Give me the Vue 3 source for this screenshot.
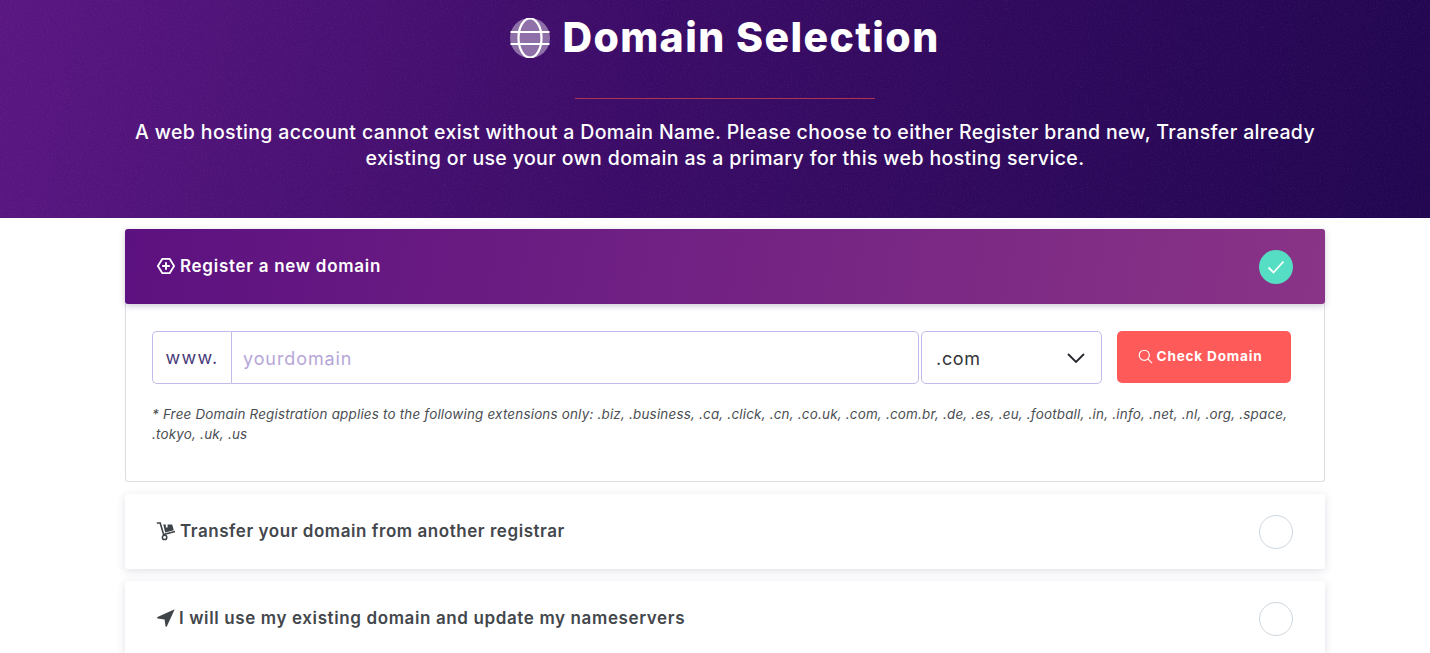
<script setup>
const tlds = '* Free Domain Registration applies to the following extensions only: .biz, .business, .ca, .click, .cn, .co.uk, .com, .com.br, .de, .es, .eu, .football, .in, .info, .net, .nl, .org, .space, .tokyo, .uk, .us'
</script>

<template>
  <div class="viewport">
    <div class="page">
      <header class="hero">
        <svg class="noise" width="100%" height="100%" aria-hidden="true">
          <filter id="grain">
            <feTurbulence type="fractalNoise" baseFrequency="0.7" numOctaves="2" seed="4" />
            <feColorMatrix values="0 0 0 0 1  0 0 0 0 1  0 0 0 0 1  0 0 0 1.6 -0.75" />
          </filter>
          <rect width="100%" height="100%" filter="url(#grain)" />
        </svg>
        <h1 class="title">
          <svg class="globe" viewBox="0 0 40 40" aria-hidden="true">
            <circle cx="20" cy="20" r="20" fill="#8f70a8" />
            <g fill="none" stroke="#fff" stroke-width="2.2">
              <ellipse cx="20" cy="20" rx="11.5" ry="19.6" />
              <path d="M0.5 14h39M0.5 26h39" />
            </g>
          </svg>
          <span>Domain Selection</span>
        </h1>
        <div class="rule"></div>
        <p class="lead">A web hosting account cannot exist without a Domain Name. Please choose to either Register brand new, Transfer already existing or use your own domain as a primary for this web hosting service.</p>
      </header>

      <main class="options">
        <section class="panel">
          <div class="row row-active">
            <div class="label">
              <svg class="ico" viewBox="0 0 20 20" aria-hidden="true">
                <path d="M6 2h8L19 10 14 18H6L1 10z" fill="none" stroke="#fff" stroke-width="2" stroke-linejoin="round" />
                <path d="M10 5.8v8.4M5.8 10h8.4" stroke="#fff" stroke-width="2.2" fill="none" />
              </svg>
              <span>Register a new domain</span>
            </div>
            <span class="check">
              <svg viewBox="0 0 20 20" width="20" height="20" aria-hidden="true">
                <path d="M2.5 10.5l5 5L17.5 4.5" fill="none" stroke="#fff" stroke-width="1.8" />
              </svg>
            </span>
          </div>
          <div class="panel-body">
            <div class="form">
              <span class="prefix">www.</span>
              <span class="domain">yourdomain</span>
              <div class="tld">
                <span>.com</span>
                <svg viewBox="0 0 18 10" width="18" height="10" aria-hidden="true">
                  <path d="M1 1l8 8 8-8" fill="none" stroke="#23262b" stroke-width="1.8" />
                </svg>
              </div>
              <button class="btn" type="button">
                <svg viewBox="0 0 16 16" width="15" height="15" aria-hidden="true">
                  <circle cx="6.7" cy="6.7" r="5.4" fill="none" stroke="#fff" stroke-width="1.2" />
                  <path d="M10.7 10.7l4.3 4.3" stroke="#fff" stroke-width="1.2" />
                </svg>
                <span>Check Domain</span>
              </button>
            </div>
            <p class="note">{{ tlds }}</p>
          </div>
        </section>

        <div class="row card">
          <div class="label">
            <svg class="ico ico-cart" viewBox="0 0 20 20" aria-hidden="true">
              <path d="M0.8 2h3.4l3.4 11.6 11.4-3.2" fill="none" stroke="#3f4448" stroke-width="1.6" />
              <circle cx="8.6" cy="16.4" r="2.2" fill="none" stroke="#3f4448" stroke-width="1.5" />
              <path d="M7.2 3.4h2.6v3h1.8v-3h4.6l1.6 5.8-8.6 2.4z" fill="#3f4448" />
            </svg>
            <span>Transfer your domain from another registrar</span>
          </div>
          <span class="radio"></span>
        </div>

        <div class="row card card-wide">
          <div class="label label-tight">
            <svg class="ico" viewBox="0 0 18 18" aria-hidden="true">
              <path d="M17.7 0.3L0.5 8q-.8.9.2 1.5L7.6 10.4l.9 6.9q.7 1 1.3.2z" fill="#3f4448" />
            </svg>
            <span>I will use my existing domain and update my nameservers</span>
          </div>
          <span class="radio"></span>
        </div>
      </main>
    </div>
  </div>
</template>

<style>
html, body { margin: 0; background: #fff; overflow: hidden; }
</style>

<style scoped>
.viewport {
  width: 1430px;
  height: 653px;
  overflow: hidden;
}
.page {
  width: 1450px;
  font-family: Inter, "Open Sans", sans-serif;
  background: #fff;
}
.hero {
  position: relative;
  height: 218px;
  box-sizing: border-box;
  background: linear-gradient(100deg, #5a1782 0%, #3c0c68 42%, #210650 100%);
  color: #fff;
  text-align: center;
  display: flex;
  flex-direction: column;
  align-items: center;
}
.noise {
  position: absolute;
  inset: 0;
  opacity: .07;
  pointer-events: none;
}
.title {
  position: relative;
  margin: 0;
  height: 76px;
  display: flex;
  align-items: center;
  gap: 12px;
  font-size: 41px;
  font-weight: 800;
  letter-spacing: 1.4px;
}
.title span { position: relative; top: -1px; }
.globe { width: 40px; height: 40px; flex: none; }
.rule { position: relative; width: 300px; height: 1px; margin-top: 22px; background: #b1344f; }
.lead {
  position: relative;
  margin: 20px 0 0;
  width: 1190px;
  font-size: 19.5px;
  line-height: 26px;
  font-weight: 500;
  letter-spacing: .37px;
}
.options {
  width: 1200px;
  margin: 11px auto 0;
  display: flex;
  flex-direction: column;
  gap: 12px;
}
.panel {
  border: 1px solid #dfdde4;
  border-top: 0;
  border-radius: 3px;
  height: 253px;
  box-sizing: border-box;
}
.row {
  height: 75px;
  box-sizing: border-box;
  padding: 0 32px;
  display: flex;
  align-items: center;
  justify-content: space-between;
  border-radius: 3px;
  font-size: 17px;
  font-weight: 600;
}
.row-active {
  margin: 0 -1px;
  color: #fff;
  letter-spacing: .72px;
  background: linear-gradient(100deg, #5c1180 0%, #8a3487 100%);
  box-shadow: 0 2px 6px rgba(60, 40, 90, .25);
}
.card {
  color: #43474c;
  background: #fff;
  letter-spacing: .55px;
  box-shadow: 0 2px 8px rgba(60, 50, 100, .16);
}
.card-wide { letter-spacing: .62px; }
.label { display: flex; align-items: center; gap: 5px; padding-bottom: 2px; }
.label-tight { gap: 4px; }
.ico { width: 18px; height: 18px; flex: none; }
.ico-cart { width: 20px; height: 20px; margin-left: -1px; margin-right: -1px; }
.check {
  width: 34px;
  height: 34px;
  border-radius: 50%;
  background: #55dec4;
  display: flex;
  align-items: center;
  justify-content: center;
}
.radio {
  width: 34px;
  height: 34px;
  box-sizing: border-box;
  border-radius: 50%;
  border: 1.5px solid #cfd7de;
}
.panel-body { padding: 27px 26px 0; }
.form { display: flex; align-items: flex-start; height: 53px; }
.prefix {
  width: 79px;
  height: 53px;
  box-sizing: border-box;
  display: flex;
  align-items: center;
  justify-content: center;
  border: 1px solid #c5b8ea;
  border-right: 0;
  border-radius: 5px 0 0 5px;
  font-size: 18px;
  letter-spacing: 1.2px;
  color: #4a3a78;
}
.domain {
  width: 688px;
  height: 53px;
  box-sizing: border-box;
  display: flex;
  align-items: center;
  padding: 1px 0 0 11px;
  border: 1px solid #c5b8ea;
  border-radius: 0 5px 5px 0;
  font-size: 18px;
  letter-spacing: .9px;
  color: #b6a6d8;
}
.tld {
  width: 181px;
  height: 53px;
  margin-left: 2px;
  box-sizing: border-box;
  display: flex;
  align-items: center;
  justify-content: space-between;
  padding: 1px 16px 0 14px;
  border: 1px solid #c5b8ea;
  border-radius: 5px;
  font-size: 18px;
  letter-spacing: .7px;
  color: #33363a;
}
.btn {
  width: 174px;
  height: 52px;
  margin-left: 15px;
  border: 0;
  border-radius: 5px;
  background: #ff5a5a;
  color: #fff;
  font: 700 13.6px Inter, sans-serif;
  letter-spacing: .8px;
  display: flex;
  align-items: center;
  justify-content: center;
  gap: 4px;
  padding: 0 8px 2px 0;
}
.note {
  margin: 20px 0 0;
  font-size: 13.4px;
  line-height: 20px;
  font-style: italic;
  letter-spacing: .21px;
  color: #4a4d52;
}
</style>
